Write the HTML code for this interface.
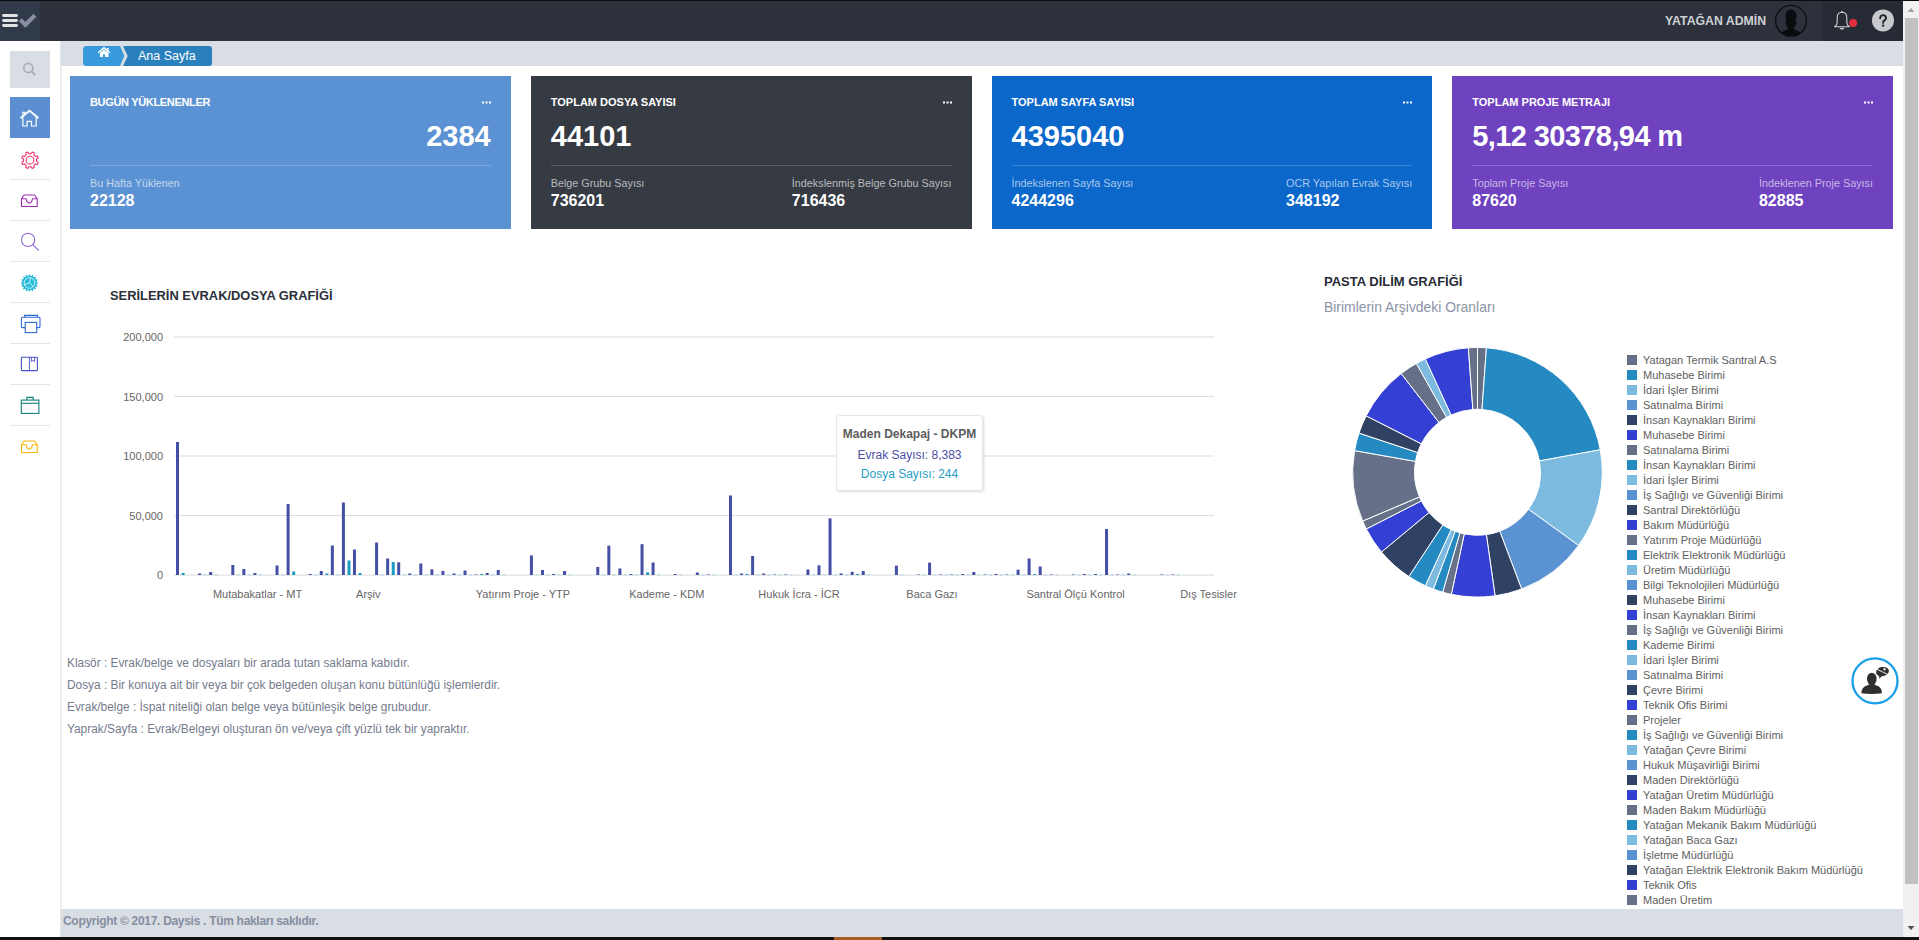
<!DOCTYPE html><html><head><meta charset="utf-8"><title>Ana Sayfa</title><style>
*{box-sizing:border-box}
html,body{margin:0;padding:0}
body{width:1919px;height:940px;overflow:hidden;position:relative;background:#fff;font-family:"Liberation Sans",sans-serif}
.a{position:absolute}
.t{position:absolute;white-space:nowrap;line-height:1}

</style></head><body>
<div class="a" style="left:0;top:0;width:1919px;height:1px;background:#0a0a0a"></div>
<div class="a" style="left:0;top:1px;width:1903px;height:40px;background:#2c313c"></div>
<div class="a" style="left:0;top:1px;width:40px;height:40px;background:#313a48"></div>
<div class="a" style="left:1823px;top:1px;width:80px;height:40px;background:#252a34"></div>
<svg class="a" style="left:0;top:0" width="40" height="41" viewBox="0 0 40 41">
<g stroke="#e2e2e2" stroke-width="2.8" stroke-linecap="round">
<line x1="3.5" y1="15.5" x2="16.5" y2="15.5"/><line x1="3.5" y1="20.5" x2="16.5" y2="20.5"/><line x1="3.5" y1="25.5" x2="16.5" y2="25.5"/></g>
<polyline points="20.2,19.6 25.4,24.8 34.9,15.3" fill="none" stroke="#8a8ea6" stroke-width="4.1" stroke-linecap="butt" stroke-linejoin="miter"/>
</svg>
<div class="t" style="left:1665px;top:15px;font-size:12.3px;font-weight:bold;color:#cfd0d2">YATAĞAN ADMİN</div>
<svg class="a" style="left:1774px;top:4px" width="34" height="34" viewBox="0 0 34 34">
<defs><clipPath id="avc"><circle cx="17" cy="16.8" r="15"/></clipPath></defs>
<circle cx="17" cy="16.8" r="15.4" fill="#2c313c" stroke="#0b0c10" stroke-width="1.3"/>
<g clip-path="url(#avc)" fill="#0b0c10">
<ellipse cx="17" cy="12.5" rx="5.6" ry="7"/>
<path d="M11.5 17 Q12 22 14 24 L14 25 Q8 27 4 32 L30 32 Q26 27 20 25 L20 24 Q22 22 22.5 17 Z"/>
</g></svg>
<svg class="a" style="left:1830px;top:8px" width="30" height="26" viewBox="0 0 30 26">
<path d="M4.6 18.8 Q7.2 17.4 7.2 13 L7.2 9.8 Q7.2 4.4 12 4.3 Q16.8 4.4 16.8 9.8 L16.8 13 Q16.8 17.4 19.4 18.8 Z" fill="none" stroke="#d0d0d0" stroke-width="1.1" stroke-linejoin="round"/>
<path d="M9.8 20.3 Q12 22.4 14.2 20.3 Z" fill="#d0d0d0" stroke="#d0d0d0" stroke-width="0.8"/>
<circle cx="12" cy="3.9" r="0.9" fill="#d0d0d0"/>
<circle cx="23.1" cy="14.9" r="4" fill="#e0303f"/>
</svg>
<svg class="a" style="left:1871px;top:9px" width="24" height="24" viewBox="0 0 24 24">
<circle cx="12" cy="11.4" r="11" fill="#c8c9cc"/>
<path d="M9.2 9.3 Q9.3 6.1 12.1 6.1 Q15 6.2 15 8.9 Q15 10.5 13.4 11.4 Q12.1 12.2 12.1 13.9" fill="none" stroke="#1f232b" stroke-width="1.9" stroke-linecap="round"/>
<circle cx="12.1" cy="16.6" r="1.2" fill="#1f232b"/>
</svg>
<div class="a" style="left:1903px;top:1px;width:16px;height:936px;background:#f1f1f1"></div>
<div class="a" style="left:1905px;top:18px;width:13px;height:866px;background:#c1c1c1"></div>
<svg class="a" style="left:1903px;top:1px" width="16" height="16"><path d="M4.5 11 L8 7 L11.5 11 Z" fill="#a3a3a3"/></svg>
<svg class="a" style="left:1903px;top:921px" width="16" height="16"><path d="M4.5 5 L8 9 L11.5 5 Z" fill="#505050"/></svg>
<div class="a" style="left:60px;top:41px;width:3px;height:896px;background:linear-gradient(to right,#e8e8e8 0,#e8e8e8 1px,#f4f4f4 1px,#f4f4f4 2px,#fbfbfb 2px)"></div>
<div class="a" style="left:10px;top:51px;width:40px;height:37px;background:#d9dde4"></div>
<svg class="a" style="left:10px;top:51px" width="40" height="37" viewBox="0 0 40 37">
<circle cx="18.3" cy="17" r="4.6" fill="none" stroke="#a9adb6" stroke-width="1.6"/>
<line x1="21.6" y1="20.4" x2="24.8" y2="23.6" stroke="#a9adb6" stroke-width="1.9" stroke-linecap="round"/></svg>
<div class="a" style="left:10px;top:97px;width:40px;height:41px;background:#5b8fd1"></div>
<svg class="a" style="left:10px;top:97px" width="40" height="41" viewBox="0 0 40 41">
<polyline points="11.3,20.6 19.5,13.8 27.7,20.6" fill="none" stroke="#fff" stroke-width="2.1" stroke-linecap="round"/>
<polyline points="12.2,20.6 19.5,14.8 26.8,20.6" fill="none" stroke="#8fb3e2" stroke-width="0.5"/>
<path d="M12.9 20.2 L12.9 29 L17.1 29 L17.1 24.3 L21.5 24.3 L21.5 29 L26.2 29 L26.2 20.2" fill="none" stroke="#fff" stroke-width="1.2"/>
<path d="M12.9 18.6 L12.9 15.4 L14.8 15.4 L14.8 17" fill="none" stroke="#fff" stroke-width="1.1"/>
</svg>
<div class="a" style="left:10px;top:179px;width:40px;height:1px;background:#e4e7ec"></div>
<div class="a" style="left:10px;top:220px;width:40px;height:1px;background:#e4e7ec"></div>
<div class="a" style="left:10px;top:261px;width:40px;height:1px;background:#e4e7ec"></div>
<div class="a" style="left:10px;top:302px;width:40px;height:1px;background:#e4e7ec"></div>
<div class="a" style="left:10px;top:343px;width:40px;height:1px;background:#e4e7ec"></div>
<div class="a" style="left:10px;top:384px;width:40px;height:1px;background:#e4e7ec"></div>
<div class="a" style="left:10px;top:425px;width:40px;height:1px;background:#e4e7ec"></div>
<svg class="a" style="left:10px;top:140px" width="40" height="40" viewBox="0 0 40 40">
<path d="M21.19 13.71 L22.18 11.98 L24.27 12.85 L23.75 14.77 L25.43 16.45 L27.35 15.93 L28.22 18.02 L26.49 19.01 L26.49 21.39 L28.22 22.38 L27.35 24.47 L25.43 23.95 L23.75 25.63 L24.27 27.55 L22.18 28.42 L21.19 26.69 L18.81 26.69 L17.82 28.42 L15.73 27.55 L16.25 25.63 L14.57 23.95 L12.65 24.47 L11.78 22.38 L13.51 21.39 L13.51 19.01 L11.78 18.02 L12.65 15.93 L14.57 16.45 L16.25 14.77 L15.73 12.85 L17.82 11.98 L18.81 13.71 Z" fill="none" stroke="#f2336c" stroke-width="1.1" stroke-linejoin="round"/>
<circle cx="20" cy="20.2" r="3.9" fill="none" stroke="#f2336c" stroke-width="1.1"/></svg>
<svg class="a" style="left:10px;top:190px" width="40" height="24" viewBox="0 0 40 24">
<path d="M11.5 8.7 L11.5 16.5 L27.2 16.5 L27.2 8.7 L24.6 5 L14.1 5 Z M11.5 8.7 L16.2 8.7 Q16.6 12.9 19.3 12.9 Q22 12.9 22.4 8.7 L27.2 8.7" fill="none" stroke="#9f2bb3" stroke-width="1.1" stroke-linejoin="round"/></svg>
<svg class="a" style="left:10px;top:225px" width="40" height="40" viewBox="0 0 40 40">
<circle cx="18.1" cy="14.9" r="6.6" fill="none" stroke="#8f68d8" stroke-width="1.1"/>
<line x1="22.8" y1="19.6" x2="28.4" y2="25.2" stroke="#8f68d8" stroke-width="1.2" stroke-linecap="round"/></svg>
<svg class="a" style="left:10px;top:265px" width="40" height="36" viewBox="0 0 40 36">
<path d="M18.63 11.05 L18.84 9.42 L20.06 9.42 L20.27 11.05 L21.35 11.26 L22.17 9.84 L23.29 10.31 L22.87 11.89 L23.78 12.50 L25.09 11.50 L25.95 12.36 L24.95 13.67 L25.56 14.58 L27.14 14.16 L27.61 15.28 L26.19 16.10 L26.40 17.18 L28.03 17.39 L28.03 18.61 L26.40 18.82 L26.19 19.90 L27.61 20.72 L27.14 21.84 L25.56 21.42 L24.95 22.33 L25.95 23.64 L25.09 24.50 L23.78 23.50 L22.87 24.11 L23.29 25.69 L22.17 26.16 L21.35 24.74 L20.27 24.95 L20.06 26.58 L18.84 26.58 L18.63 24.95 L17.55 24.74 L16.73 26.16 L15.61 25.69 L16.03 24.11 L15.12 23.50 L13.81 24.50 L12.95 23.64 L13.95 22.33 L13.34 21.42 L11.76 21.84 L11.29 20.72 L12.71 19.90 L12.50 18.82 L10.87 18.61 L10.87 17.39 L12.50 17.18 L12.71 16.10 L11.29 15.28 L11.76 14.16 L13.34 14.58 L13.95 13.67 L12.95 12.36 L13.81 11.50 L15.12 12.50 L16.03 11.89 L15.61 10.31 L16.73 9.84 L17.55 11.26 Z" fill="#27bbd8"/>
<circle cx="19.45" cy="18.0" r="7.3" fill="#27bbd8"/>
<circle cx="19.45" cy="18.0" r="5.3" fill="none" stroke="#d8f3f9" stroke-width="0.9"/>
<path d="M19.45 18.0 L20.55 12.82 M19.45 18.0 L23.39 21.55 M19.45 18.0 L14.41 19.64" stroke="#d8f3f9" stroke-width="0.9"/></svg>
<svg class="a" style="left:10px;top:305px" width="40" height="36" viewBox="0 0 40 36">
<path d="M14.6 12.2 L14.6 10.4 L27.5 10.4 L27.5 12.2" fill="none" stroke="#2e6bd2" stroke-width="1.1"/>
<rect x="11.4" y="12.3" width="18.6" height="10.3" rx="1" fill="none" stroke="#2e6bd2" stroke-width="1.1"/>
<rect x="15.2" y="17.4" width="11.5" height="10.2" fill="#fff" stroke="#2e6bd2" stroke-width="1.1"/></svg>
<svg class="a" style="left:10px;top:345px" width="40" height="36" viewBox="0 0 40 36">
<rect x="11.4" y="12.2" width="16" height="13.4" rx="0.6" fill="none" stroke="#4653c6" stroke-width="1.1"/>
<line x1="19.4" y1="12.2" x2="19.4" y2="26.2" stroke="#4a63d6" stroke-width="1"/>
<path d="M21.4 12.2 L21.4 16.6 L23 15.4 L24.6 16.6 L24.6 12.2" fill="none" stroke="#5b4fc0" stroke-width="0.9"/></svg>
<svg class="a" style="left:10px;top:385px" width="40" height="36" viewBox="0 0 40 36">
<path d="M16.8 15 L16.8 12.4 L23.2 12.4 L23.2 15" fill="none" stroke="#14807e" stroke-width="1.1"/>
<rect x="11.3" y="15.1" width="17.6" height="13.3" fill="none" stroke="#14807e" stroke-width="1.1"/>
<line x1="11.3" y1="18.3" x2="28.9" y2="18.3" stroke="#14807e" stroke-width="1.1"/></svg>
<svg class="a" style="left:10px;top:436px" width="40" height="24" viewBox="0 0 40 24">
<path d="M11.5 8.7 L11.5 16.5 L27.2 16.5 L27.2 8.7 L24.6 5 L14.1 5 Z M11.5 8.7 L16.2 8.7 Q16.6 12.9 19.3 12.9 Q22 12.9 22.4 8.7 L27.2 8.7" fill="none" stroke="#f8b400" stroke-width="1.1" stroke-linejoin="round"/></svg>
<div class="a" style="left:61px;top:41px;width:1842px;height:25px;background:#d9dde4"></div>
<svg class="a" style="left:83px;top:46px" width="130" height="20" viewBox="0 0 130 20">
<path d="M40 0 L126 0 Q129 0 129 3 L129 17 Q129 20 126 20 L40 20 L44.7 10 Z" fill="#2a7fbd"/>
<path d="M3.5 0 L37.1 0 L41.3 10 L37.1 20 L3.5 20 Q0 20 0 16.5 L0 3.5 Q0 0 3.5 0 Z" fill="#389ada"/>
<polyline points="15.2,6.8 21,1.7 26.9,6.8" fill="none" stroke="#fff" stroke-width="1.5" stroke-linejoin="miter"/>
<path d="M16.9 6.9 L21 3.4 L25.5 7.1 L25.5 10.9 L22 10.9 L22 8.3 L20 8.3 L20 10.9 L16.9 10.9 Z" fill="#fff"/>
<rect x="24" y="2" width="1.6" height="3.2" fill="#fff"/>
</svg>
<div class="t" style="left:138px;top:50px;font-size:12.5px;color:#fff">Ana Sayfa</div>
<div class="a" style="left:70px;top:76px;width:440.75px;height:153px;background:#5b92d3">
<div class="t" style="left:20px;top:21px;font-size:11px;font-weight:bold;color:#fff;letter-spacing:-0.33px">BUGÜN YÜKLENENLER</div>
<svg class="a" style="right:19px;top:25px" width="10" height="3"><rect x="0" y="0.5" width="2" height="2" fill="#fff"/><rect x="3.5" y="0.5" width="2" height="2" fill="#fff"/><rect x="7" y="0.5" width="2" height="2" fill="#fff"/></svg>
<div class="t" style="right:20px;top:46px;font-size:29px;font-weight:bold;color:#fff">2384</div>
<div class="a" style="left:20px;right:20px;top:89px;height:1px;background:#7ea8dc"></div>
<div class="t" style="left:20px;top:102px;font-size:10.8px;color:#c6d7ee">Bu Hafta Yüklenen</div>
<div class="t" style="left:20px;top:117px;font-size:16px;font-weight:bold;color:#fff">22128</div>
</div>
<div class="a" style="left:530.75px;top:76px;width:440.75px;height:153px;background:#363a42">
<div class="t" style="left:20px;top:21px;font-size:11px;font-weight:bold;color:#fff;letter-spacing:0">TOPLAM DOSYA SAYISI</div>
<svg class="a" style="right:19px;top:25px" width="10" height="3"><rect x="0" y="0.5" width="2" height="2" fill="#fff"/><rect x="3.5" y="0.5" width="2" height="2" fill="#fff"/><rect x="7" y="0.5" width="2" height="2" fill="#fff"/></svg>
<div class="t" style="left:20px;top:46px;font-size:29px;font-weight:bold;color:#fff;letter-spacing:0">44101</div>
<div class="a" style="left:20px;right:20px;top:89px;height:1px;background:#5b5f66"></div>
<div class="t" style="left:20px;top:102px;font-size:10.8px;color:#b9bbbf">Belge Grubu Sayısı</div>
<div class="t" style="left:20px;top:117px;font-size:16px;font-weight:bold;color:#fff">736201</div>
<div class="a" style="right:20px;top:102px;white-space:nowrap;line-height:1">
<div style="font-size:10.8px;color:#b9bbbf">İndekslenmiş Belge Grubu Sayısı</div>
<div style="margin-top:4px;font-size:16px;font-weight:bold;color:#fff">716436</div>
</div>
</div>
<div class="a" style="left:991.5px;top:76px;width:440.75px;height:153px;background:#0b67c9">
<div class="t" style="left:20px;top:21px;font-size:11px;font-weight:bold;color:#fff;letter-spacing:0">TOPLAM SAYFA SAYISI</div>
<svg class="a" style="right:19px;top:25px" width="10" height="3"><rect x="0" y="0.5" width="2" height="2" fill="#fff"/><rect x="3.5" y="0.5" width="2" height="2" fill="#fff"/><rect x="7" y="0.5" width="2" height="2" fill="#fff"/></svg>
<div class="t" style="left:20px;top:46px;font-size:29px;font-weight:bold;color:#fff;letter-spacing:0">4395040</div>
<div class="a" style="left:20px;right:20px;top:89px;height:1px;background:#3b84d4"></div>
<div class="t" style="left:20px;top:102px;font-size:10.8px;color:#a9c8ec">İndekslenen Sayfa Sayısı</div>
<div class="t" style="left:20px;top:117px;font-size:16px;font-weight:bold;color:#fff">4244296</div>
<div class="a" style="right:20px;top:102px;white-space:nowrap;line-height:1">
<div style="font-size:10.8px;color:#a9c8ec">OCR Yapılan Evrak Sayısı</div>
<div style="margin-top:4px;font-size:16px;font-weight:bold;color:#fff">348192</div>
</div>
</div>
<div class="a" style="left:1452.25px;top:76px;width:440.75px;height:153px;background:#6f42c0">
<div class="t" style="left:20px;top:21px;font-size:11px;font-weight:bold;color:#fff;letter-spacing:0">TOPLAM PROJE METRAJI</div>
<svg class="a" style="right:19px;top:25px" width="10" height="3"><rect x="0" y="0.5" width="2" height="2" fill="#fff"/><rect x="3.5" y="0.5" width="2" height="2" fill="#fff"/><rect x="7" y="0.5" width="2" height="2" fill="#fff"/></svg>
<div class="t" style="left:20px;top:46px;font-size:29px;font-weight:bold;color:#fff;letter-spacing:-0.6px">5,12 30378,94 m</div>
<div class="a" style="left:20px;right:20px;top:89px;height:1px;background:#8d68cf"></div>
<div class="t" style="left:20px;top:102px;font-size:10.8px;color:#c9b9e6">Toplam Proje Sayısı</div>
<div class="t" style="left:20px;top:117px;font-size:16px;font-weight:bold;color:#fff">87620</div>
<div class="a" style="right:20px;top:102px;white-space:nowrap;line-height:1">
<div style="font-size:10.8px;color:#c9b9e6">İndeklenen Proje Sayısı</div>
<div style="margin-top:4px;font-size:16px;font-weight:bold;color:#fff">82885</div>
</div>
</div>
<div class="t" style="left:110px;top:290px;font-size:12.9px;font-weight:bold;color:#2b303a">SERİLERİN EVRAK/DOSYA GRAFİĞİ</div>
<svg class="a" style="left:0;top:320px" width="1260" height="300" viewBox="0 320 1260 300">
<rect x="174" y="336.5" width="1040" height="1" fill="#dcdcdc"/>
<rect x="174" y="396.0" width="1040" height="1" fill="#dcdcdc"/>
<rect x="174" y="455.5" width="1040" height="1" fill="#dcdcdc"/>
<rect x="174" y="515.0" width="1040" height="1" fill="#dcdcdc"/>
<rect x="174" y="574.5" width="1040" height="1.3" fill="#e3e3e3"/>
<rect x="176.00" y="442.00" width="3" height="133.00" fill="#454fa5"/>
<rect x="181.60" y="573.00" width="3" height="2.00" fill="#1b9cc2"/>
<rect x="198.12" y="573.50" width="3" height="1.50" fill="#454fa5"/>
<rect x="203.72" y="574.2" width="3" height="1.3" fill="#a9d8e6" fill-opacity="0.75"/>
<rect x="209.18" y="572.00" width="3" height="3.00" fill="#454fa5"/>
<rect x="214.78" y="574.2" width="3" height="1.3" fill="#a9d8e6" fill-opacity="0.75"/>
<rect x="231.30" y="565.00" width="3" height="10.00" fill="#454fa5"/>
<rect x="236.90" y="574.2" width="3" height="1.3" fill="#a9d8e6" fill-opacity="0.75"/>
<rect x="242.36" y="569.00" width="3" height="6.00" fill="#454fa5"/>
<rect x="247.96" y="574.2" width="3" height="1.3" fill="#a9d8e6" fill-opacity="0.75"/>
<rect x="253.42" y="573.00" width="3" height="2.00" fill="#454fa5"/>
<rect x="259.02" y="574.2" width="3" height="1.3" fill="#a9d8e6" fill-opacity="0.75"/>
<rect x="275.54" y="565.50" width="3" height="9.50" fill="#454fa5"/>
<rect x="281.14" y="574.2" width="3" height="1.3" fill="#a9d8e6" fill-opacity="0.75"/>
<rect x="286.60" y="504.00" width="3" height="71.00" fill="#454fa5"/>
<rect x="292.20" y="571.50" width="3" height="3.50" fill="#1b9cc2"/>
<rect x="308.72" y="574.00" width="3" height="1.00" fill="#454fa5"/>
<rect x="314.32" y="574.2" width="3" height="1.3" fill="#a9d8e6" fill-opacity="0.75"/>
<rect x="319.78" y="571.00" width="3" height="4.00" fill="#454fa5"/>
<rect x="325.38" y="573.50" width="3" height="1.50" fill="#1b9cc2"/>
<rect x="330.84" y="545.50" width="3" height="29.50" fill="#454fa5"/>
<rect x="336.44" y="574.2" width="3" height="1.3" fill="#a9d8e6" fill-opacity="0.75"/>
<rect x="341.90" y="502.50" width="3" height="72.50" fill="#454fa5"/>
<rect x="347.50" y="560.50" width="3" height="14.50" fill="#1b9cc2"/>
<rect x="352.96" y="549.50" width="3" height="25.50" fill="#454fa5"/>
<rect x="358.56" y="573.00" width="3" height="2.00" fill="#1b9cc2"/>
<rect x="375.08" y="542.50" width="3" height="32.50" fill="#454fa5"/>
<rect x="380.68" y="574.2" width="3" height="1.3" fill="#a9d8e6" fill-opacity="0.75"/>
<rect x="386.14" y="558.50" width="3" height="16.50" fill="#454fa5"/>
<rect x="391.74" y="562.00" width="3" height="13.00" fill="#1b9cc2"/>
<rect x="397.20" y="562.30" width="3" height="12.70" fill="#454fa5"/>
<rect x="402.80" y="574.2" width="3" height="1.3" fill="#a9d8e6" fill-opacity="0.75"/>
<rect x="408.26" y="573.50" width="3" height="1.50" fill="#454fa5"/>
<rect x="413.86" y="574.2" width="3" height="1.3" fill="#a9d8e6" fill-opacity="0.75"/>
<rect x="419.32" y="563.50" width="3" height="11.50" fill="#454fa5"/>
<rect x="424.92" y="574.2" width="3" height="1.3" fill="#a9d8e6" fill-opacity="0.75"/>
<rect x="430.38" y="569.40" width="3" height="5.60" fill="#454fa5"/>
<rect x="435.98" y="574.2" width="3" height="1.3" fill="#a9d8e6" fill-opacity="0.75"/>
<rect x="441.44" y="571.00" width="3" height="4.00" fill="#454fa5"/>
<rect x="447.04" y="574.2" width="3" height="1.3" fill="#a9d8e6" fill-opacity="0.75"/>
<rect x="452.50" y="573.50" width="3" height="1.50" fill="#454fa5"/>
<rect x="458.10" y="574.2" width="3" height="1.3" fill="#a9d8e6" fill-opacity="0.75"/>
<rect x="463.56" y="570.50" width="3" height="4.50" fill="#454fa5"/>
<rect x="469.16" y="574.2" width="3" height="1.3" fill="#a9d8e6" fill-opacity="0.75"/>
<rect x="474.62" y="574.50" width="3" height="0.50" fill="#454fa5"/>
<rect x="480.22" y="574.00" width="3" height="1.00" fill="#1b9cc2"/>
<rect x="485.68" y="573.00" width="3" height="2.00" fill="#454fa5"/>
<rect x="491.28" y="574.2" width="3" height="1.3" fill="#a9d8e6" fill-opacity="0.75"/>
<rect x="496.74" y="570.00" width="3" height="5.00" fill="#454fa5"/>
<rect x="502.34" y="574.2" width="3" height="1.3" fill="#a9d8e6" fill-opacity="0.75"/>
<rect x="529.92" y="555.40" width="3" height="19.60" fill="#454fa5"/>
<rect x="535.52" y="574.2" width="3" height="1.3" fill="#a9d8e6" fill-opacity="0.75"/>
<rect x="540.98" y="570.00" width="3" height="5.00" fill="#454fa5"/>
<rect x="546.58" y="574.2" width="3" height="1.3" fill="#a9d8e6" fill-opacity="0.75"/>
<rect x="552.04" y="574.00" width="3" height="1.00" fill="#454fa5"/>
<rect x="557.64" y="574.2" width="3" height="1.3" fill="#a9d8e6" fill-opacity="0.75"/>
<rect x="563.10" y="571.00" width="3" height="4.00" fill="#454fa5"/>
<rect x="568.70" y="574.2" width="3" height="1.3" fill="#a9d8e6" fill-opacity="0.75"/>
<rect x="596.28" y="567.00" width="3" height="8.00" fill="#454fa5"/>
<rect x="601.88" y="574.2" width="3" height="1.3" fill="#a9d8e6" fill-opacity="0.75"/>
<rect x="607.34" y="545.70" width="3" height="29.30" fill="#454fa5"/>
<rect x="612.94" y="574.2" width="3" height="1.3" fill="#a9d8e6" fill-opacity="0.75"/>
<rect x="618.40" y="568.50" width="3" height="6.50" fill="#454fa5"/>
<rect x="624.00" y="574.2" width="3" height="1.3" fill="#a9d8e6" fill-opacity="0.75"/>
<rect x="629.46" y="574.00" width="3" height="1.00" fill="#454fa5"/>
<rect x="635.06" y="574.2" width="3" height="1.3" fill="#a9d8e6" fill-opacity="0.75"/>
<rect x="640.52" y="544.20" width="3" height="30.80" fill="#454fa5"/>
<rect x="646.12" y="572.30" width="3" height="2.70" fill="#1b9cc2"/>
<rect x="651.58" y="562.50" width="3" height="12.50" fill="#454fa5"/>
<rect x="657.18" y="574.2" width="3" height="1.3" fill="#a9d8e6" fill-opacity="0.75"/>
<rect x="673.70" y="574.00" width="3" height="1.00" fill="#454fa5"/>
<rect x="679.30" y="574.2" width="3" height="1.3" fill="#a9d8e6" fill-opacity="0.75"/>
<rect x="695.82" y="572.50" width="3" height="2.50" fill="#454fa5"/>
<rect x="701.42" y="574.2" width="3" height="1.3" fill="#a9d8e6" fill-opacity="0.75"/>
<rect x="706.88" y="574.50" width="3" height="0.50" fill="#454fa5"/>
<rect x="712.48" y="574.2" width="3" height="1.3" fill="#a9d8e6" fill-opacity="0.75"/>
<rect x="729.00" y="495.50" width="3" height="79.50" fill="#454fa5"/>
<rect x="734.60" y="574.2" width="3" height="1.3" fill="#a9d8e6" fill-opacity="0.75"/>
<rect x="740.06" y="573.50" width="3" height="1.50" fill="#454fa5"/>
<rect x="745.66" y="574.00" width="3" height="1.00" fill="#1b9cc2"/>
<rect x="751.12" y="556.00" width="3" height="19.00" fill="#454fa5"/>
<rect x="756.72" y="574.2" width="3" height="1.3" fill="#a9d8e6" fill-opacity="0.75"/>
<rect x="762.18" y="573.50" width="3" height="1.50" fill="#454fa5"/>
<rect x="767.78" y="574.2" width="3" height="1.3" fill="#a9d8e6" fill-opacity="0.75"/>
<rect x="773.24" y="574.50" width="3" height="0.50" fill="#454fa5"/>
<rect x="778.84" y="574.2" width="3" height="1.3" fill="#a9d8e6" fill-opacity="0.75"/>
<rect x="784.30" y="574.50" width="3" height="0.50" fill="#454fa5"/>
<rect x="789.90" y="574.2" width="3" height="1.3" fill="#a9d8e6" fill-opacity="0.75"/>
<rect x="806.42" y="569.50" width="3" height="5.50" fill="#454fa5"/>
<rect x="812.02" y="574.2" width="3" height="1.3" fill="#a9d8e6" fill-opacity="0.75"/>
<rect x="817.48" y="565.30" width="3" height="9.70" fill="#454fa5"/>
<rect x="823.08" y="574.2" width="3" height="1.3" fill="#a9d8e6" fill-opacity="0.75"/>
<rect x="828.54" y="518.40" width="3" height="56.60" fill="#454fa5"/>
<rect x="834.14" y="574.2" width="3" height="1.3" fill="#a9d8e6" fill-opacity="0.75"/>
<rect x="839.60" y="573.50" width="3" height="1.50" fill="#454fa5"/>
<rect x="845.20" y="574.2" width="3" height="1.3" fill="#a9d8e6" fill-opacity="0.75"/>
<rect x="850.66" y="571.80" width="3" height="3.20" fill="#454fa5"/>
<rect x="856.26" y="574.00" width="3" height="1.00" fill="#1b9cc2"/>
<rect x="861.72" y="571.00" width="3" height="4.00" fill="#454fa5"/>
<rect x="867.32" y="574.2" width="3" height="1.3" fill="#a9d8e6" fill-opacity="0.75"/>
<rect x="894.90" y="565.60" width="3" height="9.40" fill="#454fa5"/>
<rect x="900.50" y="574.2" width="3" height="1.3" fill="#a9d8e6" fill-opacity="0.75"/>
<rect x="917.02" y="574.50" width="3" height="0.50" fill="#454fa5"/>
<rect x="922.62" y="574.2" width="3" height="1.3" fill="#a9d8e6" fill-opacity="0.75"/>
<rect x="928.08" y="562.60" width="3" height="12.40" fill="#454fa5"/>
<rect x="933.68" y="574.2" width="3" height="1.3" fill="#a9d8e6" fill-opacity="0.75"/>
<rect x="939.14" y="574.50" width="3" height="0.50" fill="#454fa5"/>
<rect x="944.74" y="574.2" width="3" height="1.3" fill="#a9d8e6" fill-opacity="0.75"/>
<rect x="950.20" y="574.50" width="3" height="0.50" fill="#454fa5"/>
<rect x="955.80" y="574.2" width="3" height="1.3" fill="#a9d8e6" fill-opacity="0.75"/>
<rect x="961.26" y="574.00" width="3" height="1.00" fill="#454fa5"/>
<rect x="966.86" y="574.2" width="3" height="1.3" fill="#a9d8e6" fill-opacity="0.75"/>
<rect x="972.32" y="572.00" width="3" height="3.00" fill="#454fa5"/>
<rect x="977.92" y="574.2" width="3" height="1.3" fill="#a9d8e6" fill-opacity="0.75"/>
<rect x="983.38" y="574.50" width="3" height="0.50" fill="#454fa5"/>
<rect x="988.98" y="574.2" width="3" height="1.3" fill="#a9d8e6" fill-opacity="0.75"/>
<rect x="994.44" y="574.00" width="3" height="1.00" fill="#454fa5"/>
<rect x="1000.04" y="574.2" width="3" height="1.3" fill="#a9d8e6" fill-opacity="0.75"/>
<rect x="1005.50" y="574.50" width="3" height="0.50" fill="#454fa5"/>
<rect x="1011.10" y="574.2" width="3" height="1.3" fill="#a9d8e6" fill-opacity="0.75"/>
<rect x="1016.56" y="569.70" width="3" height="5.30" fill="#454fa5"/>
<rect x="1022.16" y="574.2" width="3" height="1.3" fill="#a9d8e6" fill-opacity="0.75"/>
<rect x="1027.62" y="558.50" width="3" height="16.50" fill="#454fa5"/>
<rect x="1033.22" y="574.00" width="3" height="1.00" fill="#1b9cc2"/>
<rect x="1038.68" y="566.50" width="3" height="8.50" fill="#454fa5"/>
<rect x="1044.28" y="574.2" width="3" height="1.3" fill="#a9d8e6" fill-opacity="0.75"/>
<rect x="1049.74" y="574.50" width="3" height="0.50" fill="#454fa5"/>
<rect x="1055.34" y="574.2" width="3" height="1.3" fill="#a9d8e6" fill-opacity="0.75"/>
<rect x="1071.86" y="574.50" width="3" height="0.50" fill="#454fa5"/>
<rect x="1077.46" y="574.2" width="3" height="1.3" fill="#a9d8e6" fill-opacity="0.75"/>
<rect x="1082.92" y="574.00" width="3" height="1.00" fill="#454fa5"/>
<rect x="1088.52" y="574.2" width="3" height="1.3" fill="#a9d8e6" fill-opacity="0.75"/>
<rect x="1093.98" y="574.00" width="3" height="1.00" fill="#454fa5"/>
<rect x="1099.58" y="574.2" width="3" height="1.3" fill="#a9d8e6" fill-opacity="0.75"/>
<rect x="1105.04" y="529.00" width="3" height="46.00" fill="#454fa5"/>
<rect x="1110.64" y="574.2" width="3" height="1.3" fill="#a9d8e6" fill-opacity="0.75"/>
<rect x="1116.10" y="574.50" width="3" height="0.50" fill="#454fa5"/>
<rect x="1121.70" y="574.2" width="3" height="1.3" fill="#a9d8e6" fill-opacity="0.75"/>
<rect x="1127.16" y="573.50" width="3" height="1.50" fill="#454fa5"/>
<rect x="1132.76" y="574.2" width="3" height="1.3" fill="#a9d8e6" fill-opacity="0.75"/>
<rect x="1160.34" y="574.50" width="3" height="0.50" fill="#454fa5"/>
<rect x="1165.94" y="574.2" width="3" height="1.3" fill="#a9d8e6" fill-opacity="0.75"/>
<rect x="1171.40" y="574.50" width="3" height="0.50" fill="#454fa5"/>
<rect x="1177.00" y="574.2" width="3" height="1.3" fill="#a9d8e6" fill-opacity="0.75"/>
<text x="163" y="341" text-anchor="end" font-size="11" fill="#666" font-family="Liberation Sans">200,000</text>
<text x="163" y="400.5" text-anchor="end" font-size="11" fill="#666" font-family="Liberation Sans">150,000</text>
<text x="163" y="460" text-anchor="end" font-size="11" fill="#666" font-family="Liberation Sans">100,000</text>
<text x="163" y="519.5" text-anchor="end" font-size="11" fill="#666" font-family="Liberation Sans">50,000</text>
<text x="163" y="579" text-anchor="end" font-size="11" fill="#666" font-family="Liberation Sans">0</text>
<text x="257.5" y="598.3" text-anchor="middle" font-size="11" fill="#666" font-family="Liberation Sans">Mutabakatlar - MT</text>
<text x="368.3" y="598.3" text-anchor="middle" font-size="11" fill="#666" font-family="Liberation Sans">Arşiv</text>
<text x="523" y="598.3" text-anchor="middle" font-size="11" fill="#666" font-family="Liberation Sans">Yatırım Proje - YTP</text>
<text x="666.8" y="598.3" text-anchor="middle" font-size="11" fill="#666" font-family="Liberation Sans">Kademe - KDM</text>
<text x="799" y="598.3" text-anchor="middle" font-size="11" fill="#666" font-family="Liberation Sans">Hukuk İcra - İCR</text>
<text x="932" y="598.3" text-anchor="middle" font-size="11" fill="#666" font-family="Liberation Sans">Baca Gazı</text>
<text x="1075.6" y="598.3" text-anchor="middle" font-size="11" fill="#666" font-family="Liberation Sans">Santral Ölçü Kontrol</text>
<text x="1208.5" y="598.3" text-anchor="middle" font-size="11" fill="#666" font-family="Liberation Sans">Dış Tesisler</text>
<rect x="837.5" y="416.5" width="146" height="75" rx="3" fill="none" stroke="#000" stroke-opacity="0.015" stroke-width="5"/>
<rect x="837.5" y="416.5" width="146" height="75" rx="3" fill="none" stroke="#000" stroke-opacity="0.03" stroke-width="3"/>
<rect x="837.5" y="416.5" width="146" height="75" rx="3" fill="none" stroke="#000" stroke-opacity="0.05" stroke-width="1"/>
<rect x="836.5" y="415.5" width="146" height="75" rx="3" fill="#fff" stroke="#e6e6e6" stroke-width="1"/>
<text x="909.5" y="437.6" text-anchor="middle" font-size="12" font-weight="bold" fill="#5c5c5c" font-family="Liberation Sans">Maden Dekapaj - DKPM</text>
<text x="909.5" y="458.8" text-anchor="middle" font-size="12" fill="#4a4fa4" font-family="Liberation Sans">Evrak Sayısı: 8,383</text>
<text x="909.5" y="477.8" text-anchor="middle" font-size="12" fill="#1f9cc4" font-family="Liberation Sans">Dosya Sayısı: 244</text>
</svg>
<div class="t" style="left:1324px;top:275px;font-size:13px;font-weight:bold;color:#262b36">PASTA DİLİM GRAFİĞİ</div>
<div class="t" style="left:1324px;top:301px;font-size:13.9px;color:#8b93a5">Birimlerin Arşivdeki Oranları</div>
<svg class="a" style="left:1340px;top:335px" width="280" height="275" viewBox="1340 335 280 275">
<path d="M1477.50 347.50 A124.8 124.8 0 0 1 1486.42 347.82 L1482.00 409.46 A63 63 0 0 0 1477.50 409.30 Z" fill="#667189" stroke="#fff" stroke-width="1" stroke-linejoin="round"/>
<path d="M1486.42 347.82 A124.8 124.8 0 0 1 1600.25 449.77 L1539.47 460.93 A63 63 0 0 0 1482.00 409.46 Z" fill="#2589c2" stroke="#fff" stroke-width="1" stroke-linejoin="round"/>
<path d="M1600.25 449.77 A124.8 124.8 0 0 1 1578.59 545.48 L1528.53 509.24 A63 63 0 0 0 1539.47 460.93 Z" fill="#7cbadf" stroke="#fff" stroke-width="1" stroke-linejoin="round"/>
<path d="M1578.59 545.48 A124.8 124.8 0 0 1 1521.61 589.04 L1499.77 531.23 A63 63 0 0 0 1528.53 509.24 Z" fill="#5b92d2" stroke="#fff" stroke-width="1" stroke-linejoin="round"/>
<path d="M1521.61 589.04 A124.8 124.8 0 0 1 1495.08 595.85 L1486.38 534.67 A63 63 0 0 0 1499.77 531.23 Z" fill="#2f4263" stroke="#fff" stroke-width="1" stroke-linejoin="round"/>
<path d="M1495.08 595.85 A124.8 124.8 0 0 1 1451.34 594.33 L1464.29 533.90 A63 63 0 0 0 1486.38 534.67 Z" fill="#3440d3" stroke="#fff" stroke-width="1" stroke-linejoin="round"/>
<path d="M1451.34 594.33 A124.8 124.8 0 0 1 1442.68 592.14 L1459.92 532.80 A63 63 0 0 0 1464.29 533.90 Z" fill="#667189" stroke="#fff" stroke-width="1" stroke-linejoin="round"/>
<path d="M1442.68 592.14 A124.8 124.8 0 0 1 1433.39 589.04 L1455.23 531.23 A63 63 0 0 0 1459.92 532.80 Z" fill="#2589c2" stroke="#fff" stroke-width="1" stroke-linejoin="round"/>
<path d="M1433.39 589.04 A124.8 124.8 0 0 1 1425.35 585.68 L1451.17 529.54 A63 63 0 0 0 1455.23 531.23 Z" fill="#7cbadf" stroke="#fff" stroke-width="1" stroke-linejoin="round"/>
<path d="M1425.35 585.68 A124.8 124.8 0 0 1 1408.80 576.49 L1442.82 524.90 A63 63 0 0 0 1451.17 529.54 Z" fill="#2589c2" stroke="#fff" stroke-width="1" stroke-linejoin="round"/>
<path d="M1408.80 576.49 A124.8 124.8 0 0 1 1381.48 552.02 L1429.03 512.54 A63 63 0 0 0 1442.82 524.90 Z" fill="#2f4263" stroke="#fff" stroke-width="1" stroke-linejoin="round"/>
<path d="M1381.48 552.02 A124.8 124.8 0 0 1 1366.30 528.96 L1421.37 500.90 A63 63 0 0 0 1429.03 512.54 Z" fill="#3440d3" stroke="#fff" stroke-width="1" stroke-linejoin="round"/>
<path d="M1366.30 528.96 A124.8 124.8 0 0 1 1362.62 521.06 L1419.51 496.92 A63 63 0 0 0 1421.37 500.90 Z" fill="#667189" stroke="#fff" stroke-width="1" stroke-linejoin="round"/>
<path d="M1362.62 521.06 A124.8 124.8 0 0 1 1354.60 450.63 L1415.46 461.36 A63 63 0 0 0 1419.51 496.92 Z" fill="#667189" stroke="#fff" stroke-width="1" stroke-linejoin="round"/>
<path d="M1354.60 450.63 A124.8 124.8 0 0 1 1359.01 433.11 L1417.69 452.52 A63 63 0 0 0 1415.46 461.36 Z" fill="#2589c2" stroke="#fff" stroke-width="1" stroke-linejoin="round"/>
<path d="M1359.01 433.11 A124.8 124.8 0 0 1 1366.20 415.84 L1421.32 443.80 A63 63 0 0 0 1417.69 452.52 Z" fill="#2f4263" stroke="#fff" stroke-width="1" stroke-linejoin="round"/>
<path d="M1366.20 415.84 A124.8 124.8 0 0 1 1401.18 373.56 L1438.97 422.45 A63 63 0 0 0 1421.32 443.80 Z" fill="#3440d3" stroke="#fff" stroke-width="1" stroke-linejoin="round"/>
<path d="M1401.18 373.56 A124.8 124.8 0 0 1 1416.43 363.47 L1446.67 417.36 A63 63 0 0 0 1438.97 422.45 Z" fill="#667189" stroke="#fff" stroke-width="1" stroke-linejoin="round"/>
<path d="M1416.43 363.47 A124.8 124.8 0 0 1 1425.35 358.92 L1451.17 415.06 A63 63 0 0 0 1446.67 417.36 Z" fill="#7cbadf" stroke="#fff" stroke-width="1" stroke-linejoin="round"/>
<path d="M1425.35 358.92 A124.8 124.8 0 0 1 1468.36 347.84 L1472.89 409.47 A63 63 0 0 0 1451.17 415.06 Z" fill="#3440d3" stroke="#fff" stroke-width="1" stroke-linejoin="round"/>
<path d="M1468.36 347.84 A124.8 124.8 0 0 1 1477.50 347.50 L1477.50 409.30 A63 63 0 0 0 1472.89 409.47 Z" fill="#667189" stroke="#fff" stroke-width="1" stroke-linejoin="round"/>
</svg>
<div class="a" style="left:1627px;top:355px;width:10px;height:10px;background:#667189"></div>
<div class="t" style="left:1643px;top:355px;font-size:11px;color:#606060">Yatagan Termik Santral A.S</div>
<div class="a" style="left:1627px;top:370px;width:10px;height:10px;background:#2589c2"></div>
<div class="t" style="left:1643px;top:370px;font-size:11px;color:#606060">Muhasebe Birimi</div>
<div class="a" style="left:1627px;top:385px;width:10px;height:10px;background:#7cbadf"></div>
<div class="t" style="left:1643px;top:385px;font-size:11px;color:#606060">İdari İşler Birimi</div>
<div class="a" style="left:1627px;top:400px;width:10px;height:10px;background:#5b92d2"></div>
<div class="t" style="left:1643px;top:400px;font-size:11px;color:#606060">Satınalma Birimi</div>
<div class="a" style="left:1627px;top:415px;width:10px;height:10px;background:#2f4263"></div>
<div class="t" style="left:1643px;top:415px;font-size:11px;color:#606060">İnsan Kaynakları Birimi</div>
<div class="a" style="left:1627px;top:430px;width:10px;height:10px;background:#3440d3"></div>
<div class="t" style="left:1643px;top:430px;font-size:11px;color:#606060">Muhasebe Birimi</div>
<div class="a" style="left:1627px;top:445px;width:10px;height:10px;background:#667189"></div>
<div class="t" style="left:1643px;top:445px;font-size:11px;color:#606060">Satınalama Birimi</div>
<div class="a" style="left:1627px;top:460px;width:10px;height:10px;background:#2589c2"></div>
<div class="t" style="left:1643px;top:460px;font-size:11px;color:#606060">İnsan Kaynakları Birimi</div>
<div class="a" style="left:1627px;top:475px;width:10px;height:10px;background:#7cbadf"></div>
<div class="t" style="left:1643px;top:475px;font-size:11px;color:#606060">İdari İşler Birimi</div>
<div class="a" style="left:1627px;top:490px;width:10px;height:10px;background:#5b92d2"></div>
<div class="t" style="left:1643px;top:490px;font-size:11px;color:#606060">İş Sağlığı ve Güvenliği Birimi</div>
<div class="a" style="left:1627px;top:505px;width:10px;height:10px;background:#2f4263"></div>
<div class="t" style="left:1643px;top:505px;font-size:11px;color:#606060">Santral Direktörlüğü</div>
<div class="a" style="left:1627px;top:520px;width:10px;height:10px;background:#3440d3"></div>
<div class="t" style="left:1643px;top:520px;font-size:11px;color:#606060">Bakım Müdürlüğü</div>
<div class="a" style="left:1627px;top:535px;width:10px;height:10px;background:#667189"></div>
<div class="t" style="left:1643px;top:535px;font-size:11px;color:#606060">Yatırım Proje Müdürlüğü</div>
<div class="a" style="left:1627px;top:550px;width:10px;height:10px;background:#2589c2"></div>
<div class="t" style="left:1643px;top:550px;font-size:11px;color:#606060">Elektrik Elektronik Müdürlüğü</div>
<div class="a" style="left:1627px;top:565px;width:10px;height:10px;background:#7cbadf"></div>
<div class="t" style="left:1643px;top:565px;font-size:11px;color:#606060">Üretim Müdürlüğü</div>
<div class="a" style="left:1627px;top:580px;width:10px;height:10px;background:#5b92d2"></div>
<div class="t" style="left:1643px;top:580px;font-size:11px;color:#606060">Bilgi Teknolojileri Müdürlüğü</div>
<div class="a" style="left:1627px;top:595px;width:10px;height:10px;background:#2f4263"></div>
<div class="t" style="left:1643px;top:595px;font-size:11px;color:#606060">Muhasebe Birimi</div>
<div class="a" style="left:1627px;top:610px;width:10px;height:10px;background:#3440d3"></div>
<div class="t" style="left:1643px;top:610px;font-size:11px;color:#606060">İnsan Kaynakları Birimi</div>
<div class="a" style="left:1627px;top:625px;width:10px;height:10px;background:#667189"></div>
<div class="t" style="left:1643px;top:625px;font-size:11px;color:#606060">İş Sağlığı ve Güvenliği Birimi</div>
<div class="a" style="left:1627px;top:640px;width:10px;height:10px;background:#2589c2"></div>
<div class="t" style="left:1643px;top:640px;font-size:11px;color:#606060">Kademe Birimi</div>
<div class="a" style="left:1627px;top:655px;width:10px;height:10px;background:#7cbadf"></div>
<div class="t" style="left:1643px;top:655px;font-size:11px;color:#606060">İdari İşler Birimi</div>
<div class="a" style="left:1627px;top:670px;width:10px;height:10px;background:#5b92d2"></div>
<div class="t" style="left:1643px;top:670px;font-size:11px;color:#606060">Satınalma Birimi</div>
<div class="a" style="left:1627px;top:685px;width:10px;height:10px;background:#2f4263"></div>
<div class="t" style="left:1643px;top:685px;font-size:11px;color:#606060">Çevre Birimi</div>
<div class="a" style="left:1627px;top:700px;width:10px;height:10px;background:#3440d3"></div>
<div class="t" style="left:1643px;top:700px;font-size:11px;color:#606060">Teknik Ofis Birimi</div>
<div class="a" style="left:1627px;top:715px;width:10px;height:10px;background:#667189"></div>
<div class="t" style="left:1643px;top:715px;font-size:11px;color:#606060">Projeler</div>
<div class="a" style="left:1627px;top:730px;width:10px;height:10px;background:#2589c2"></div>
<div class="t" style="left:1643px;top:730px;font-size:11px;color:#606060">İş Sağlığı ve Güvenliği Birimi</div>
<div class="a" style="left:1627px;top:745px;width:10px;height:10px;background:#7cbadf"></div>
<div class="t" style="left:1643px;top:745px;font-size:11px;color:#606060">Yatağan Çevre Birimi</div>
<div class="a" style="left:1627px;top:760px;width:10px;height:10px;background:#5b92d2"></div>
<div class="t" style="left:1643px;top:760px;font-size:11px;color:#606060">Hukuk Müşavirliği Birimi</div>
<div class="a" style="left:1627px;top:775px;width:10px;height:10px;background:#2f4263"></div>
<div class="t" style="left:1643px;top:775px;font-size:11px;color:#606060">Maden Direktörlüğü</div>
<div class="a" style="left:1627px;top:790px;width:10px;height:10px;background:#3440d3"></div>
<div class="t" style="left:1643px;top:790px;font-size:11px;color:#606060">Yatağan Üretim Müdürlüğü</div>
<div class="a" style="left:1627px;top:805px;width:10px;height:10px;background:#667189"></div>
<div class="t" style="left:1643px;top:805px;font-size:11px;color:#606060">Maden Bakım Müdürlüğü</div>
<div class="a" style="left:1627px;top:820px;width:10px;height:10px;background:#2589c2"></div>
<div class="t" style="left:1643px;top:820px;font-size:11px;color:#606060">Yatağan Mekanik Bakım Müdürlüğü</div>
<div class="a" style="left:1627px;top:835px;width:10px;height:10px;background:#7cbadf"></div>
<div class="t" style="left:1643px;top:835px;font-size:11px;color:#606060">Yatağan Baca Gazı</div>
<div class="a" style="left:1627px;top:850px;width:10px;height:10px;background:#5b92d2"></div>
<div class="t" style="left:1643px;top:850px;font-size:11px;color:#606060">İşletme Müdürlüğü</div>
<div class="a" style="left:1627px;top:865px;width:10px;height:10px;background:#2f4263"></div>
<div class="t" style="left:1643px;top:865px;font-size:11px;color:#606060">Yatağan Elektrik Elektronik Bakım Müdürlüğü</div>
<div class="a" style="left:1627px;top:880px;width:10px;height:10px;background:#3440d3"></div>
<div class="t" style="left:1643px;top:880px;font-size:11px;color:#606060">Teknik Ofis</div>
<div class="a" style="left:1627px;top:895px;width:10px;height:10px;background:#667189"></div>
<div class="t" style="left:1643px;top:895px;font-size:11px;color:#606060">Maden Üretim</div>
<div class="t" style="left:67px;top:658px;font-size:11.87px;color:#757b8d">Klasör : Evrak/belge ve dosyaları bir arada tutan saklama kabıdır.</div>
<div class="t" style="left:67px;top:680px;font-size:11.87px;color:#757b8d">Dosya : Bir konuya ait bir veya bir çok belgeden oluşan konu bütünlüğü işlemlerdir.</div>
<div class="t" style="left:67px;top:702px;font-size:11.87px;color:#757b8d">Evrak/belge : İspat niteliği olan belge veya bütünleşik belge grubudur.</div>
<div class="t" style="left:67px;top:724px;font-size:11.87px;color:#757b8d">Yaprak/Sayfa : Evrak/Belgeyi oluşturan ön ve/veya çift yüzlü tek bir yapraktır.</div>
<svg class="a" style="left:1850px;top:656px" width="50" height="50" viewBox="0 0 50 50">
<circle cx="25" cy="24.9" r="22.5" fill="#fff" stroke="#199ee9" stroke-width="2.3"/>
<ellipse cx="21.8" cy="23" rx="4.8" ry="6.2" fill="#2f2f2f"/>
<path d="M11.3 37.2 Q11.5 31 17 29.5 L19.5 28.3 L24 28.3 L26.5 29.5 Q32 31 32 37.2 Q21.6 38.6 11.3 37.2 Z" fill="#2f2f2f"/>
<ellipse cx="32.5" cy="15.6" rx="6.5" ry="4.6" fill="#2f2f2f" transform="rotate(-12 32.5 15.6)"/>
<path d="M28.5 18.5 L29.6 22.8 L32 19.5 Z" fill="#2f2f2f"/>
<line x1="27" y1="13.3" x2="37.5" y2="18.3" stroke="#fff" stroke-width="0.9"/>
<circle cx="34.5" cy="13.3" r="1.2" fill="#ddd"/>
</svg>
<div class="a" style="left:61px;top:909px;width:1842px;height:28px;background:#d9dde4"></div>
<div class="t" style="left:63px;top:915px;font-size:12px;font-weight:bold;color:#868fa1;letter-spacing:-0.3px">Copyright © 2017. Daysis . Tüm hakları saklıdır.</div>
<div class="a" style="left:0;top:937px;width:1919px;height:3px;background:#111"></div>
<div class="a" style="left:834px;top:937px;width:48px;height:3px;background:#a65c20"></div>
</body></html>
